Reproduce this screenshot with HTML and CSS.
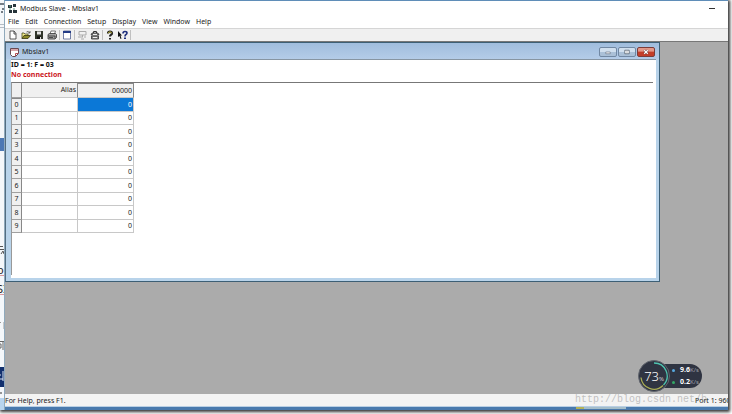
FILE: index.html
```html
<!DOCTYPE html>
<html lang="en">
<head>
  <meta charset="UTF-8">
  <meta name="viewport" content="width=device-width, initial-scale=1.0">
  <title>Modbus Slave - Mbslav1</title>
  <link rel="stylesheet" href="styles.css">
</head>
<body>
  <div class="desktop">
    <!-- edge of the window behind -->
    <div class="behind" aria-hidden="true">
      <svg width="5" height="410" viewBox="0 0 5 410">
        <path d="M0 4h4M2 9h3M1 12h2" stroke="#4a5560" stroke-width="1.5"/>
        <path d="M0 24.5h4M0 27.500h4" stroke="#b5bcc4"/>
        <path d="M0 138h5v13h-5z" fill="#4c78b4"/>
        <path d="M0 246.500h3M0 249.500h4M1 254l2-3 1 3" stroke="#555" fill="none"/>
        <path d="M0 275.500h5M0 294.500h5" stroke="#d99a9f"/>
        <path d="M0 322.500h1M4 322v7" stroke="#999"/>
        <path d="M0 341.500h4M3 342v8M0 344h1v4h-1" stroke="#666" fill="none"/>
        <path d="M0 367h5v20h-5z" fill="#12306e"/>
        <path d="M0 375h1M3 371v10M0 379h3" stroke="#dbe4f2"/>
        <path d="M0 393h2" stroke="#333"/>
        <path d="M0 398h5v12h-5z" fill="#b8d4ee"/>
      </svg>
      <span class="behind-text behind-o">o</span>
      <span class="behind-text behind-si">SI</span>
    </div>

    <div class="app">
      <header class="app-title">
        <svg width="9" height="10" viewBox="0 0 9 10">
          <path d="M0 1h4v3h-4zM5 0h3v3h-3zM1 6h3v3h-3zM5 6h4v3h-4z" fill="#26343a"/>
          <path d="M1 2h2M6 4v2M2 4v2" stroke="#5fa08c"/>
        </svg>
        <h1>Modbus Slave - Mbslav1</h1>
        <button class="minimize" aria-label="Minimize"></button>
      </header>

      <nav class="menu">
        <button>File</button>
        <button>Edit</button>
        <button>Connection</button>
        <button>Setup</button>
        <button>Display</button>
        <button>View</button>
        <button>Window</button>
        <button>Help</button>
      </nav>

      <div class="toolbar">
        <div class="tool-group">
          <button aria-label="New">
            <svg viewBox="0 0 10 10"><path d="M2 1h4l2 2.500v5.500h-6zM6 1v3h2" fill="#fff" stroke="#333" stroke-width=".8"/></svg>
          </button>
          <button aria-label="Open">
            <svg viewBox="0 0 10 10"><path d="M1 8.500v-5.500h2l1 1h3v2" fill="#f3ec8c" stroke="#444a20" stroke-width=".8"/><path d="M1 8.500l2-3h6.500l-2.500 3z" fill="#8c8a28" stroke="#33340f" stroke-width=".8"/><path d="M5.500 2q2-1.500 3 .8M9 1v2h-2" fill="none" stroke="#333" stroke-width=".7"/></svg>
          </button>
          <button aria-label="Save">
            <svg viewBox="0 0 10 10"><path d="M1 1h8v8h-8z" fill="#30352a"/><path d="M3 1.500h4v3h-4z" fill="#e4e4e4"/><path d="M3 6.500h4v2.500h-4z" fill="#111"/><path d="M6 7h1v2h-1z" fill="#ddd"/></svg>
          </button>
          <button aria-label="Print">
            <svg viewBox="0 0 10 10"><path d="M3 4l1-3h4.500l-1 3" fill="#fff" stroke="#444" stroke-width=".7"/><path d="M1 4.500l1.500-1h6l1 1v3l-1.500 1.500h-7z" fill="#a5a5a5" stroke="#333" stroke-width=".8"/><path d="M1 6h7v2.500M2 7.500h4" fill="none" stroke="#333" stroke-width=".8"/></svg>
          </button>
        </div>
        <div class="tool-group">
          <button aria-label="Display setup">
            <svg viewBox="0 0 10 10"><path d="M1.500 1h7v8h-7z" fill="#fff" stroke="#506090" stroke-width=".8"/><path d="M1 1h8v2h-8z" fill="#233b86"/></svg>
          </button>
        </div>
        <div class="tool-group">
          <button aria-label="Connect" disabled>
            <svg viewBox="0 0 10 10"><path d="M2 1.500h7v3.500h-7zM1 7h5M7 7h2M4 9h3M5.500 5v2" fill="none" stroke="#aaa"/></svg>
          </button>
          <button aria-label="Disconnect">
            <svg viewBox="0 0 10 10"><path d="M3.500 3v-1.500h3v1.500" fill="none" stroke="#333"/><path d="M2 3h6l1 2h-8zM1.500 6h7v3h-7z" fill="#888" stroke="#333" stroke-width=".8"/><path d="M3 7.500h4M3 4.500h4" stroke="#eee"/></svg>
          </button>
        </div>
        <div class="tool-group">
          <button aria-label="Help">
            <svg viewBox="0 0 10 10"><path d="M3 3.500q0-2 2-2t2 1.800q0 1-1 1.600t-1 1.600" fill="none" stroke="#222" stroke-width="2.200"/><path d="M3.200 3.300q.2-1.500 1.800-1.500t1.600 1.500" fill="none" stroke="#d5c833" stroke-width=".8"/><path d="M4 8h2v1.500h-2z" fill="#222"/></svg>
          </button>
          <button aria-label="Context help">
            <svg viewBox="0 0 10 10"><path d="M0 1l4 4.500h-1.500l1 3-1 .5-1-3-1.500 1z" fill="#111"/><path d="M5 3.500q0-2 2-2t2 1.500q0 1-1 1.500t-1 2" fill="none" stroke="#1d2e7d" stroke-width="1.600"/><path d="M6 7.500h2v1.500h-2z" fill="#1d2e7d"/></svg>
          </button>
        </div>
      </div>

      <main class="workspace">
        <section class="child">
          <header class="child-title">
            <svg width="9" height="9" viewBox="0 0 9 9">
              <path d="M.5 .5h8v5l-3 3h-3l-2-2z" fill="#fff" stroke="#684a52"/>
              <path d="M1 2h7M5.500 8v-2.500h3" fill="none" stroke="#b34b52"/>
            </svg>
            <h2>Mbslav1</h2>
            <div class="child-buttons">
              <button aria-label="Minimize"><svg viewBox="0 0 17 9"><path d="M6 4.500h5v2h-5z" fill="#fff" stroke="#6b7888" stroke-width=".8"/></svg></button>
              <button aria-label="Maximize"><svg viewBox="0 0 17 9"><path d="M6 2.500h5v4h-5z" fill="#fff" stroke="#566270" stroke-width=".9"/><path d="M8 4h1v1h-1z" fill="#566270"/></svg></button>
              <button class="close" aria-label="Close"><svg viewBox="0 0 17 9"><path d="M6.500 2.500l4 4M10.500 2.500l-4 4" stroke="#5d302c" stroke-width="2.500"/><path d="M6.500 2.500l4 4M10.500 2.500l-4 4" stroke="#fff" stroke-width="1.400"/></svg></button>
            </div>
          </header>
          <div class="child-body">
            <div class="info">
              <p>ID = 1: F = 03</p>
              <p class="error">No connection</p>
            </div>
            <div class="grid-area">
              <table class="registers">
                <thead>
                  <tr><th class="row-head"></th><th>Alias</th><th class="current">00000</th></tr>
                </thead>
                <tbody>
                  <tr><th class="row-head current">0</th><td></td><td class="selected">0</td></tr>
                  <tr><th class="row-head">1</th><td></td><td>0</td></tr>
                  <tr><th class="row-head">2</th><td></td><td>0</td></tr>
                  <tr><th class="row-head">3</th><td></td><td>0</td></tr>
                  <tr><th class="row-head">4</th><td></td><td>0</td></tr>
                  <tr><th class="row-head">5</th><td></td><td>0</td></tr>
                  <tr><th class="row-head">6</th><td></td><td>0</td></tr>
                  <tr><th class="row-head">7</th><td></td><td>0</td></tr>
                  <tr><th class="row-head">8</th><td></td><td>0</td></tr>
                  <tr><th class="row-head">9</th><td></td><td>0</td></tr>
                </tbody>
              </table>
            </div>
          </div>
        </section>
      </main>

      <footer class="status">
        <span>For Help, press F1.</span>
        <span class="port">Port 1: 9600</span>
      </footer>
      <div class="taskbar"><span class="task"></span></div>
    </div>

    <!-- floating network meter -->
    <div class="meter">
      <div class="dial">
        <svg viewBox="0 0 32 32">
          <circle cx="16" cy="16" r="15.500" fill="#2f3442" stroke="#62666e"/>
          <path d="M16 3a13 13 0 0 1 9.500 22" fill="none" stroke="#4fc4b0" stroke-width="1.300"/>
          <path d="M25 25.500a13 13 0 0 1-22-8" fill="none" stroke="#a9ad55" stroke-width="1.300"/>
        </svg>
        <span class="percent">73<small>%</small></span>
      </div>
      <div class="speeds">
        <span class="speed up">9.6<small>K/s</small></span>
        <span class="speed down">0.2<small>K/s</small></span>
      </div>
    </div>
    <span class="watermark">http://blog.csdn.net/b</span>
  </div>
</body>
</html>
```
FILE: styles.css
```css
:root {
  --gray: #ababab;
  --bar: #f0f0f0;
  --line: #c8c8c8;
  --frame: #b8d3ea;
}

* {
  box-sizing: border-box;
}

body {
  margin: 0;
  height: 100vh;
  padding: 0 4px 4px 0;
  background: #fff;
  color: #222;
  font: 7px/10px "Noto Sans", sans-serif;
  overflow: hidden;
}

h1, h2, p {
  margin: 0;
  font-size: 7px;
  font-weight: normal;
}

button {
  border: 0;
  padding: 0;
  background: none;
  font: inherit;
  color: inherit;
}

svg {
  display: block;
}

.desktop {
  position: relative;
  display: flex;
  height: 100%;
  box-shadow: 1px 1px 3px 1px #333;
}

/* Window behind */
.behind {
  position: relative;
  width: 4px;
  flex-shrink: 0;
  background: #f4f7fa;
  overflow: hidden;
}

.behind-text {
  position: absolute;
  left: -3px;
  font-size: 11px;
  line-height: 12px;
  color: #222;
}

.behind-o {
  top: 264px;
}

.behind-si {
  top: 283px;
}

/* Main window */
.app {
  flex: 1;
  min-width: 0;
  display: flex;
  flex-direction: column;
  border-top: 1px solid #5f8db8;
  border-left: 1px solid #8fa9bc;
  background: #fff;
}

.app-title {
  display: flex;
  align-items: center;
  gap: 3px;
  height: 15px;
  padding: 0 13px 0 3px;
}

.minimize {
  width: 6px;
  height: 1px;
  margin-left: auto;
  background: #333;
}

.menu {
  display: flex;
  gap: 6px;
  height: 12px;
  padding-left: 3px;
}

.toolbar {
  display: flex;
  align-items: center;
  height: 13px;
  padding-left: 1px;
  border-top: 1px solid #d5d5d5;
  background: var(--bar);
}

.tool-group {
  display: flex;
  gap: 3px;
  padding: 0 2px;
  border-right: 1px solid #c0c0c0;
}

.tool-group button,
.tool-group svg {
  width: 10px;
  height: 10px;
}

.workspace {
  flex: 1;
  min-height: 0;
  border-top: 1px solid #777;
  background: var(--gray);
}

/* Child window */
.child {
  display: flex;
  flex-direction: column;
  width: calc(100% - 68px);
  height: 240px;
  border: 1px solid #3d5f75;
  border-left-color: #536d80;
  background: var(--frame);
  padding: 0 3px 3px 5px;
}

.child-title {
  display: flex;
  align-items: center;
  gap: 3px;
  height: 16px;
  margin: 0 -3px 0 -5px;
  padding: 2px 4px 0;
  background: linear-gradient(#a0bddd, #b4cce8);
}

.child-buttons {
  display: flex;
  gap: 1px;
  margin-left: auto;
}

.child-buttons button {
  width: 18px;
  height: 10px;
  border: 1px solid #7188a3;
  border-radius: 2px;
  background: linear-gradient(#d0dfee 45%, #aac0d7 50%);
}

.child-buttons svg {
  width: 16px;
  height: 8px;
}

.child-buttons .close {
  border-color: #7c3c39;
  background: linear-gradient(#e29788 40%, #c33e29 50%);
}

.child-body {
  flex: 1;
  display: flex;
  flex-direction: column;
  border-top: 1px solid #8795a2;
  background: #fff;
}

.info {
  height: 22px;
  color: #111;
}

.info p {
  font-weight: bold;
}

.error {
  color: #cb161d;
}

.grid-area {
  flex: 1;
  margin: 0 3px 3px 0;
  border-top: 1px solid #777;
  border-left: 1px solid #999;
}

.registers {
  border-collapse: separate;
  border-spacing: 0;
  table-layout: fixed;
  width: 122px;
  text-align: right;
}

.registers th,
.registers td {
  width: 56px;
  height: 14px;
  padding: 0 1px;
  border: solid var(--line);
  border-width: 0 1px 1px 0;
  font-weight: normal;
  line-height: 10px;
}

.registers thead th {
  height: 15px;
  background: var(--bar);
  border-right-color: #888;
}

.registers tr:nth-child(even) > * {
  height: 13px;
}

.registers .row-head {
  width: 10px;
  background: var(--bar);
  border-right-color: #888;
  border-bottom-color: #a0a0a0;
  text-align: center;
}

.registers .selected {
  background: #0b78d7;
  color: #fff;
}

.registers .current {
  border-top: 1px solid #888;
}

/* Status bar and the taskbar under it */
.status {
  display: flex;
  justify-content: space-between;
  height: 12px;
  line-height: 14px;
  background: #f3f3f3;
  white-space: nowrap;
}

.port {
  width: 33px;
  overflow: hidden;
}

.taskbar {
  height: 4px;
  background: #4979ad;
  border-top: 1px solid #b9cfe4;
}

.task {
  display: block;
  width: 50px;
  height: 2px;
  margin-left: 79%;
  background: #a5bdc9;
  border-left: 8px solid #b5b256;
}

/* Network meter */
.meter {
  position: absolute;
  right: 26px;
  bottom: 18px;
  display: flex;
  align-items: center;
  color: #fff;
}

.dial {
  position: relative;
  width: 32px;
  height: 32px;
  z-index: 1;
}

.percent {
  position: absolute;
  inset: 0;
  text-align: center;
  font-size: 13px;
  line-height: 32px;
  font-weight: 300;
}

.percent small {
  font-size: 6px;
}

.speeds {
  display: flex;
  flex-direction: column;
  gap: 2px;
  width: 48px;
  margin-left: -16px;
  padding: 1px 0 1px 18px;
  border-radius: 12px;
  background: #2f3442;
}

.speed {
  display: flex;
  align-items: center;
  font-weight: bold;
}

.speed small {
  font-size: 6px;
  font-weight: normal;
  color: #9da1aa;
}

.speed::before {
  content: "";
  width: 3px;
  height: 3px;
  margin-right: 5px;
  border-radius: 50%;
  background: #57a9df;
}

.down::before {
  background: #32a866;
}

.watermark {
  position: absolute;
  right: 21px;
  bottom: 4px;
  font: 10px/12px "Liberation Mono", monospace;
  color: rgba(140, 140, 140, 0.5);
}
```
